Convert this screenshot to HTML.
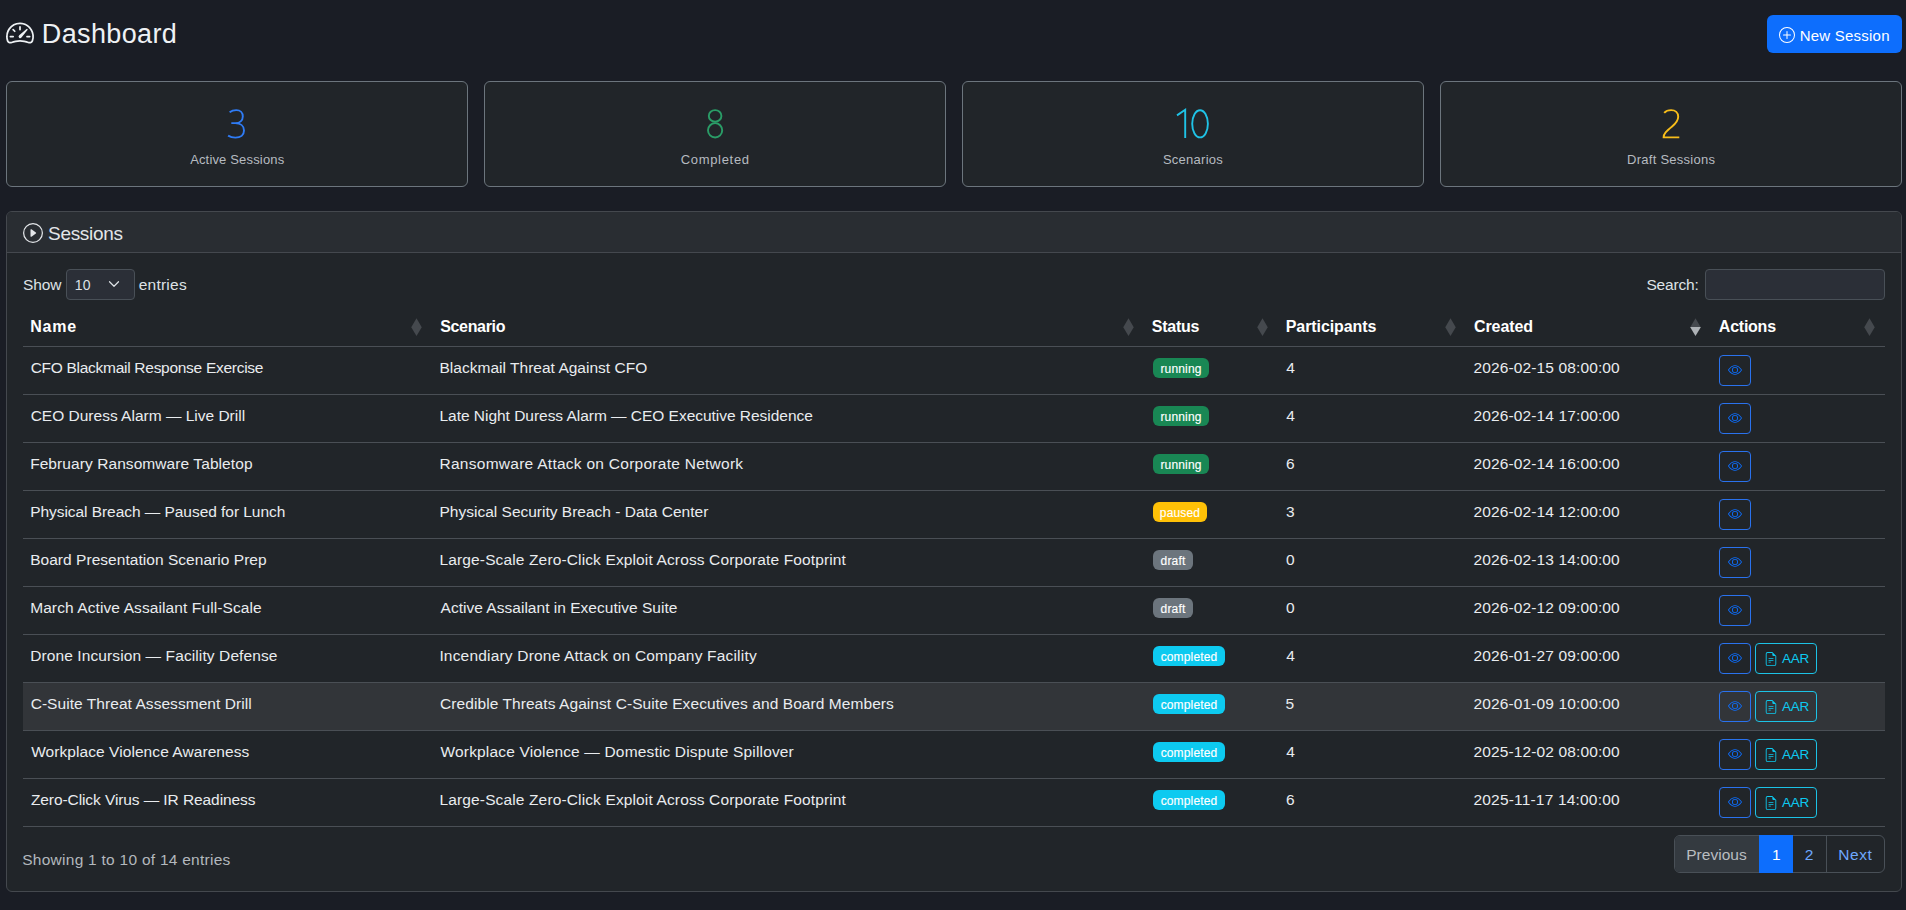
<!DOCTYPE html>
<html><head><meta charset="utf-8"><title>Dashboard</title>
<style>
html,body{margin:0;padding:0}
body{width:1906px;height:910px;overflow:hidden;background:#1a1d25;position:relative;font-family:"Liberation Sans",sans-serif}
.bx{position:absolute;box-sizing:border-box}
.ic{position:absolute;display:block;overflow:visible}
.tx{position:absolute;white-space:nowrap}
.bdg{position:absolute;height:20px;border-radius:6px;color:#fff;font-size:12px;line-height:22px;text-align:center;-webkit-text-stroke:0.15px #fff;letter-spacing:0.15px}
</style></head><body>
<svg class="ic" style="left:6px;top:18.5px" width="28" height="28" viewBox="0 0 16 16" fill="#eef1f4"><path d="M8 4a.5.5 0 0 1 .5.5V6a.5.5 0 0 1-1 0V4.5A.5.5 0 0 1 8 4M3.732 5.732a.5.5 0 0 1 .707 0l.915.914a.5.5 0 1 1-.708.708l-.914-.915a.5.5 0 0 1 0-.707M2 10a.5.5 0 0 1 .5-.5h1.586a.5.5 0 0 1 0 1H2.5A.5.5 0 0 1 2 10m9.5 0a.5.5 0 0 1 .5-.5h1.5a.5.5 0 0 1 0 1H12a.5.5 0 0 1-.5-.5m.754-4.246a.39.39 0 0 0-.527-.02L7.547 9.31a.91.91 0 1 0 1.302 1.258l3.434-4.297a.39.39 0 0 0-.029-.518z"/><path fill-rule="evenodd" d="M0 10a8 8 0 1 1 15.547 2.661c-.442 1.253-1.845 1.602-2.932 1.25C11.309 13.488 9.475 13 8 13c-1.474 0-3.31.488-4.615.911-1.087.352-2.49.003-2.932-1.25A8 8 0 0 1 0 10m8-7a7 7 0 0 0-6.603 9.329c.203.575.923.876 1.68.63C4.397 12.533 6.358 12 8 12s3.604.532 4.923.96c.757.245 1.477-.056 1.68-.631A7 7 0 0 0 8 3"/></svg>
<div class="bx" style="left:1767px;top:15px;width:135px;height:38px;background:#0d6efd;border-radius:6px"></div>
<svg class="ic" style="left:1779px;top:27px" width="16" height="16" viewBox="0 0 16 16" fill="#ffffff"><path d="M8 15A7 7 0 1 1 8 1a7 7 0 0 1 0 14m0 1A8 8 0 1 0 8 0a8 8 0 0 0 0 16"/><path d="M8 4a.5.5 0 0 1 .5.5v3h3a.5.5 0 0 1 0 1h-3v3a.5.5 0 0 1-1 0v-3h-3a.5.5 0 0 1 0-1h3v-3A.5.5 0 0 1 8 4"/></svg>
<div class="bx" style="left:6px;top:81px;width:462px;height:106px;border:1px solid #6c757d;border-radius:6px;background:#212529"></div>
<div class="bx" style="left:484px;top:81px;width:462px;height:106px;border:1px solid #6c757d;border-radius:6px;background:#212529"></div>
<div class="bx" style="left:962px;top:81px;width:462px;height:106px;border:1px solid #6c757d;border-radius:6px;background:#212529"></div>
<div class="bx" style="left:1440px;top:81px;width:462px;height:106px;border:1px solid #6c757d;border-radius:6px;background:#212529"></div>
<svg class="ic" style="left:0;top:0" width="1906" height="200" viewBox="0 0 1906 200" fill="none" stroke-width="1.9" stroke-linecap="butt">
<path stroke="#2f7cf6" d="M229.6,112.2 C231.6,110.7 233.9,110.1 236.3,110.1 C240.4,110.1 242.8,112.7 242.8,116.4 C242.8,120.4 239.8,123.1 235.2,123.1 L231.3,123.1 M235.2,123.1 C240.6,123.1 244,126.1 244,130.4 C244,134.9 240.6,137.6 235.4,137.6 C232.6,137.6 230.1,136.9 228.1,135.6"/>
<ellipse stroke="#2a9d67" cx="715.1" cy="115.9" rx="6.3" ry="5.8"/>
<ellipse stroke="#2a9d67" cx="715.1" cy="130.3" rx="7.1" ry="7.2"/>
<path stroke="#1fc3e6" d="M1177,115.4 L1185.2,109.8 L1185.2,137.9"/>
<ellipse stroke="#1fc3e6" cx="1200.05" cy="123.8" rx="7.85" ry="13.6"/>
<path stroke="#f7bd1a" d="M1664.2,112.9 C1665.8,111 1668.4,110.1 1671.1,110.1 C1675.4,110.1 1678.2,112.8 1678.2,116.8 C1678.2,120.6 1676.1,123.2 1672.1,126.5 C1666.2,131.3 1663.6,133.6 1663.6,137.4 L1679.3,137.4"/>
</svg>
<div class="bx" style="left:6px;top:211px;width:1896px;height:681px;border:1px solid #44484e;border-radius:6px;background:#212529;overflow:hidden"><div style="position:absolute;left:0;top:0;right:0;height:40px;background:#292d32;border-bottom:1px solid #44484e"></div></div>
<svg class="ic" style="left:23px;top:223px" width="20" height="20" viewBox="0 0 16 16" fill="#e3e6e9"><path d="M8 15A7 7 0 1 1 8 1a7 7 0 0 1 0 14m0 1A8 8 0 1 0 8 0a8 8 0 0 0 0 16"/><path d="M6.271 5.055a.5.5 0 0 1 .52.038l3.5 2.5a.5.5 0 0 1 0 .814l-3.5 2.5A.5.5 0 0 1 6 10.5v-5a.5.5 0 0 1 .271-.445"/></svg>
<div class="bx" style="left:66px;top:269px;width:69px;height:31px;border:1px solid #495057;border-radius:4px;background:#2b2f37"></div>
<svg class="ic" style="left:107.5px;top:277.5px" width="12" height="12" viewBox="0 0 16 16"><path fill="none" stroke="#dee2e6" stroke-linecap="round" stroke-linejoin="round" stroke-width="1.6" d="m2 5 6 6 6-6"/></svg>
<div class="bx" style="left:1705px;top:269px;width:180px;height:31px;border:1px solid #495057;border-radius:4px;background:#2b2f37"></div>
<div class="bx" style="left:23px;top:683px;width:1862px;height:47px;background:#323539"></div>
<div class="bx" style="left:23px;top:346px;width:1862px;height:1px;background:#4a4f55"></div>
<div class="bx" style="left:23px;top:394px;width:1862px;height:1px;background:#4a4f55"></div>
<div class="bx" style="left:23px;top:442px;width:1862px;height:1px;background:#4a4f55"></div>
<div class="bx" style="left:23px;top:490px;width:1862px;height:1px;background:#4a4f55"></div>
<div class="bx" style="left:23px;top:538px;width:1862px;height:1px;background:#4a4f55"></div>
<div class="bx" style="left:23px;top:586px;width:1862px;height:1px;background:#4a4f55"></div>
<div class="bx" style="left:23px;top:634px;width:1862px;height:1px;background:#4a4f55"></div>
<div class="bx" style="left:23px;top:682px;width:1862px;height:1px;background:#4a4f55"></div>
<div class="bx" style="left:23px;top:730px;width:1862px;height:1px;background:#4a4f55"></div>
<div class="bx" style="left:23px;top:778px;width:1862px;height:1px;background:#4a4f55"></div>
<div class="bx" style="left:23px;top:826px;width:1862px;height:1px;background:#4a4f55"></div>
<svg class="ic" style="left:411px;top:318px" width="11" height="18" viewBox="0 0 11 18"><polygon fill="#45494e" points="0.4,9 5.5,0.2 10.6,9"/><polygon fill="#45494e" points="0.1,9 5.5,18 10.9,9"/></svg>
<svg class="ic" style="left:1123px;top:318px" width="11" height="18" viewBox="0 0 11 18"><polygon fill="#45494e" points="0.4,9 5.5,0.2 10.6,9"/><polygon fill="#45494e" points="0.1,9 5.5,18 10.9,9"/></svg>
<svg class="ic" style="left:1257px;top:318px" width="11" height="18" viewBox="0 0 11 18"><polygon fill="#45494e" points="0.4,9 5.5,0.2 10.6,9"/><polygon fill="#45494e" points="0.1,9 5.5,18 10.9,9"/></svg>
<svg class="ic" style="left:1445px;top:318px" width="11" height="18" viewBox="0 0 11 18"><polygon fill="#45494e" points="0.4,9 5.5,0.2 10.6,9"/><polygon fill="#45494e" points="0.1,9 5.5,18 10.9,9"/></svg>
<svg class="ic" style="left:1690px;top:318px" width="11" height="18" viewBox="0 0 11 18"><polygon fill="#45494e" points="0.4,9 5.5,0.2 10.6,9"/><polygon fill="#aeb2b6" points="0.1,9 5.5,18 10.9,9"/></svg>
<svg class="ic" style="left:1864px;top:318px" width="11" height="18" viewBox="0 0 11 18"><polygon fill="#45494e" points="0.4,9 5.5,0.2 10.6,9"/><polygon fill="#45494e" points="0.1,9 5.5,18 10.9,9"/></svg>
<div class="bdg" style="left:1153px;top:358px;width:56px;background:#198754">running</div>
<div class="bx" style="left:1719px;top:355px;width:32px;height:31px;border:1px solid #2a72ee;border-radius:4px"></div>
<svg class="ic" style="left:1728px;top:363px" width="14" height="14" viewBox="0 0 16 16" fill="#0d6efd"><path d="M16 8s-3-5.5-8-5.5S0 8 0 8s3 5.5 8 5.5S16 8 16 8M1.173 8a13 13 0 0 1 1.66-2.043C4.12 4.668 5.88 3.5 8 3.5s3.879 1.168 5.168 2.457A13 13 0 0 1 14.828 8q-.086.13-.195.288c-.335.48-.83 1.12-1.465 1.755C11.879 11.332 10.119 12.5 8 12.5s-3.879-1.168-5.168-2.457A13 13 0 0 1 1.172 8z"/><path d="M8 5.5a2.5 2.5 0 1 0 0 5 2.5 2.5 0 0 0 0-5M4.5 8a3.5 3.5 0 1 1 7 0 3.5 3.5 0 0 1-7 0"/></svg>
<div class="bdg" style="left:1153px;top:406px;width:56px;background:#198754">running</div>
<div class="bx" style="left:1719px;top:403px;width:32px;height:31px;border:1px solid #2a72ee;border-radius:4px"></div>
<svg class="ic" style="left:1728px;top:411px" width="14" height="14" viewBox="0 0 16 16" fill="#0d6efd"><path d="M16 8s-3-5.5-8-5.5S0 8 0 8s3 5.5 8 5.5S16 8 16 8M1.173 8a13 13 0 0 1 1.66-2.043C4.12 4.668 5.88 3.5 8 3.5s3.879 1.168 5.168 2.457A13 13 0 0 1 14.828 8q-.086.13-.195.288c-.335.48-.83 1.12-1.465 1.755C11.879 11.332 10.119 12.5 8 12.5s-3.879-1.168-5.168-2.457A13 13 0 0 1 1.172 8z"/><path d="M8 5.5a2.5 2.5 0 1 0 0 5 2.5 2.5 0 0 0 0-5M4.5 8a3.5 3.5 0 1 1 7 0 3.5 3.5 0 0 1-7 0"/></svg>
<div class="bdg" style="left:1153px;top:454px;width:56px;background:#198754">running</div>
<div class="bx" style="left:1719px;top:451px;width:32px;height:31px;border:1px solid #2a72ee;border-radius:4px"></div>
<svg class="ic" style="left:1728px;top:459px" width="14" height="14" viewBox="0 0 16 16" fill="#0d6efd"><path d="M16 8s-3-5.5-8-5.5S0 8 0 8s3 5.5 8 5.5S16 8 16 8M1.173 8a13 13 0 0 1 1.66-2.043C4.12 4.668 5.88 3.5 8 3.5s3.879 1.168 5.168 2.457A13 13 0 0 1 14.828 8q-.086.13-.195.288c-.335.48-.83 1.12-1.465 1.755C11.879 11.332 10.119 12.5 8 12.5s-3.879-1.168-5.168-2.457A13 13 0 0 1 1.172 8z"/><path d="M8 5.5a2.5 2.5 0 1 0 0 5 2.5 2.5 0 0 0 0-5M4.5 8a3.5 3.5 0 1 1 7 0 3.5 3.5 0 0 1-7 0"/></svg>
<div class="bdg" style="left:1153px;top:502px;width:54px;background:#ffc107">paused</div>
<div class="bx" style="left:1719px;top:499px;width:32px;height:31px;border:1px solid #2a72ee;border-radius:4px"></div>
<svg class="ic" style="left:1728px;top:507px" width="14" height="14" viewBox="0 0 16 16" fill="#0d6efd"><path d="M16 8s-3-5.5-8-5.5S0 8 0 8s3 5.5 8 5.5S16 8 16 8M1.173 8a13 13 0 0 1 1.66-2.043C4.12 4.668 5.88 3.5 8 3.5s3.879 1.168 5.168 2.457A13 13 0 0 1 14.828 8q-.086.13-.195.288c-.335.48-.83 1.12-1.465 1.755C11.879 11.332 10.119 12.5 8 12.5s-3.879-1.168-5.168-2.457A13 13 0 0 1 1.172 8z"/><path d="M8 5.5a2.5 2.5 0 1 0 0 5 2.5 2.5 0 0 0 0-5M4.5 8a3.5 3.5 0 1 1 7 0 3.5 3.5 0 0 1-7 0"/></svg>
<div class="bdg" style="left:1153px;top:550px;width:40px;background:#6c757d">draft</div>
<div class="bx" style="left:1719px;top:547px;width:32px;height:31px;border:1px solid #2a72ee;border-radius:4px"></div>
<svg class="ic" style="left:1728px;top:555px" width="14" height="14" viewBox="0 0 16 16" fill="#0d6efd"><path d="M16 8s-3-5.5-8-5.5S0 8 0 8s3 5.5 8 5.5S16 8 16 8M1.173 8a13 13 0 0 1 1.66-2.043C4.12 4.668 5.88 3.5 8 3.5s3.879 1.168 5.168 2.457A13 13 0 0 1 14.828 8q-.086.13-.195.288c-.335.48-.83 1.12-1.465 1.755C11.879 11.332 10.119 12.5 8 12.5s-3.879-1.168-5.168-2.457A13 13 0 0 1 1.172 8z"/><path d="M8 5.5a2.5 2.5 0 1 0 0 5 2.5 2.5 0 0 0 0-5M4.5 8a3.5 3.5 0 1 1 7 0 3.5 3.5 0 0 1-7 0"/></svg>
<div class="bdg" style="left:1153px;top:598px;width:40px;background:#6c757d">draft</div>
<div class="bx" style="left:1719px;top:595px;width:32px;height:31px;border:1px solid #2a72ee;border-radius:4px"></div>
<svg class="ic" style="left:1728px;top:603px" width="14" height="14" viewBox="0 0 16 16" fill="#0d6efd"><path d="M16 8s-3-5.5-8-5.5S0 8 0 8s3 5.5 8 5.5S16 8 16 8M1.173 8a13 13 0 0 1 1.66-2.043C4.12 4.668 5.88 3.5 8 3.5s3.879 1.168 5.168 2.457A13 13 0 0 1 14.828 8q-.086.13-.195.288c-.335.48-.83 1.12-1.465 1.755C11.879 11.332 10.119 12.5 8 12.5s-3.879-1.168-5.168-2.457A13 13 0 0 1 1.172 8z"/><path d="M8 5.5a2.5 2.5 0 1 0 0 5 2.5 2.5 0 0 0 0-5M4.5 8a3.5 3.5 0 1 1 7 0 3.5 3.5 0 0 1-7 0"/></svg>
<div class="bdg" style="left:1153px;top:646px;width:72px;background:#0dcaf0">completed</div>
<div class="bx" style="left:1719px;top:643px;width:32px;height:31px;border:1px solid #2a72ee;border-radius:4px"></div>
<svg class="ic" style="left:1728px;top:651px" width="14" height="14" viewBox="0 0 16 16" fill="#0d6efd"><path d="M16 8s-3-5.5-8-5.5S0 8 0 8s3 5.5 8 5.5S16 8 16 8M1.173 8a13 13 0 0 1 1.66-2.043C4.12 4.668 5.88 3.5 8 3.5s3.879 1.168 5.168 2.457A13 13 0 0 1 14.828 8q-.086.13-.195.288c-.335.48-.83 1.12-1.465 1.755C11.879 11.332 10.119 12.5 8 12.5s-3.879-1.168-5.168-2.457A13 13 0 0 1 1.172 8z"/><path d="M8 5.5a2.5 2.5 0 1 0 0 5 2.5 2.5 0 0 0 0-5M4.5 8a3.5 3.5 0 1 1 7 0 3.5 3.5 0 0 1-7 0"/></svg>
<div class="bx" style="left:1755px;top:643px;width:62px;height:31px;border:1px solid #1cc3e6;border-radius:4px"></div>
<svg class="ic" style="left:1764px;top:652px" width="14" height="14" viewBox="0 0 16 16" fill="#0dcaf0"><path d="M5.5 7a.5.5 0 0 0 0 1h5a.5.5 0 0 0 0-1zM5 9.5a.5.5 0 0 1 .5-.5h5a.5.5 0 0 1 0 1h-5a.5.5 0 0 1-.5-.5m0 2a.5.5 0 0 1 .5-.5h2a.5.5 0 0 1 0 1h-2a.5.5 0 0 1-.5-.5"/><path d="M9.5 0H4a2 2 0 0 0-2 2v12a2 2 0 0 0 2 2h8a2 2 0 0 0 2-2V4.5zm0 1v2A1.5 1.5 0 0 0 11 4.5h2V14a1 1 0 0 1-1 1H4a1 1 0 0 1-1-1V2a1 1 0 0 1 1-1z"/></svg>
<div class="tx" style="left:1782px;top:643px;font-size:13.5px;line-height:31px;color:#0dcaf0;letter-spacing:-0.3px">AAR</div>
<div class="bdg" style="left:1153px;top:694px;width:72px;background:#0dcaf0">completed</div>
<div class="bx" style="left:1719px;top:691px;width:32px;height:31px;border:1px solid #2a72ee;border-radius:4px"></div>
<svg class="ic" style="left:1728px;top:699px" width="14" height="14" viewBox="0 0 16 16" fill="#0d6efd"><path d="M16 8s-3-5.5-8-5.5S0 8 0 8s3 5.5 8 5.5S16 8 16 8M1.173 8a13 13 0 0 1 1.66-2.043C4.12 4.668 5.88 3.5 8 3.5s3.879 1.168 5.168 2.457A13 13 0 0 1 14.828 8q-.086.13-.195.288c-.335.48-.83 1.12-1.465 1.755C11.879 11.332 10.119 12.5 8 12.5s-3.879-1.168-5.168-2.457A13 13 0 0 1 1.172 8z"/><path d="M8 5.5a2.5 2.5 0 1 0 0 5 2.5 2.5 0 0 0 0-5M4.5 8a3.5 3.5 0 1 1 7 0 3.5 3.5 0 0 1-7 0"/></svg>
<div class="bx" style="left:1755px;top:691px;width:62px;height:31px;border:1px solid #1cc3e6;border-radius:4px"></div>
<svg class="ic" style="left:1764px;top:700px" width="14" height="14" viewBox="0 0 16 16" fill="#0dcaf0"><path d="M5.5 7a.5.5 0 0 0 0 1h5a.5.5 0 0 0 0-1zM5 9.5a.5.5 0 0 1 .5-.5h5a.5.5 0 0 1 0 1h-5a.5.5 0 0 1-.5-.5m0 2a.5.5 0 0 1 .5-.5h2a.5.5 0 0 1 0 1h-2a.5.5 0 0 1-.5-.5"/><path d="M9.5 0H4a2 2 0 0 0-2 2v12a2 2 0 0 0 2 2h8a2 2 0 0 0 2-2V4.5zm0 1v2A1.5 1.5 0 0 0 11 4.5h2V14a1 1 0 0 1-1 1H4a1 1 0 0 1-1-1V2a1 1 0 0 1 1-1z"/></svg>
<div class="tx" style="left:1782px;top:691px;font-size:13.5px;line-height:31px;color:#0dcaf0;letter-spacing:-0.3px">AAR</div>
<div class="bdg" style="left:1153px;top:742px;width:72px;background:#0dcaf0">completed</div>
<div class="bx" style="left:1719px;top:739px;width:32px;height:31px;border:1px solid #2a72ee;border-radius:4px"></div>
<svg class="ic" style="left:1728px;top:747px" width="14" height="14" viewBox="0 0 16 16" fill="#0d6efd"><path d="M16 8s-3-5.5-8-5.5S0 8 0 8s3 5.5 8 5.5S16 8 16 8M1.173 8a13 13 0 0 1 1.66-2.043C4.12 4.668 5.88 3.5 8 3.5s3.879 1.168 5.168 2.457A13 13 0 0 1 14.828 8q-.086.13-.195.288c-.335.48-.83 1.12-1.465 1.755C11.879 11.332 10.119 12.5 8 12.5s-3.879-1.168-5.168-2.457A13 13 0 0 1 1.172 8z"/><path d="M8 5.5a2.5 2.5 0 1 0 0 5 2.5 2.5 0 0 0 0-5M4.5 8a3.5 3.5 0 1 1 7 0 3.5 3.5 0 0 1-7 0"/></svg>
<div class="bx" style="left:1755px;top:739px;width:62px;height:31px;border:1px solid #1cc3e6;border-radius:4px"></div>
<svg class="ic" style="left:1764px;top:748px" width="14" height="14" viewBox="0 0 16 16" fill="#0dcaf0"><path d="M5.5 7a.5.5 0 0 0 0 1h5a.5.5 0 0 0 0-1zM5 9.5a.5.5 0 0 1 .5-.5h5a.5.5 0 0 1 0 1h-5a.5.5 0 0 1-.5-.5m0 2a.5.5 0 0 1 .5-.5h2a.5.5 0 0 1 0 1h-2a.5.5 0 0 1-.5-.5"/><path d="M9.5 0H4a2 2 0 0 0-2 2v12a2 2 0 0 0 2 2h8a2 2 0 0 0 2-2V4.5zm0 1v2A1.5 1.5 0 0 0 11 4.5h2V14a1 1 0 0 1-1 1H4a1 1 0 0 1-1-1V2a1 1 0 0 1 1-1z"/></svg>
<div class="tx" style="left:1782px;top:739px;font-size:13.5px;line-height:31px;color:#0dcaf0;letter-spacing:-0.3px">AAR</div>
<div class="bdg" style="left:1153px;top:790px;width:72px;background:#0dcaf0">completed</div>
<div class="bx" style="left:1719px;top:787px;width:32px;height:31px;border:1px solid #2a72ee;border-radius:4px"></div>
<svg class="ic" style="left:1728px;top:795px" width="14" height="14" viewBox="0 0 16 16" fill="#0d6efd"><path d="M16 8s-3-5.5-8-5.5S0 8 0 8s3 5.5 8 5.5S16 8 16 8M1.173 8a13 13 0 0 1 1.66-2.043C4.12 4.668 5.88 3.5 8 3.5s3.879 1.168 5.168 2.457A13 13 0 0 1 14.828 8q-.086.13-.195.288c-.335.48-.83 1.12-1.465 1.755C11.879 11.332 10.119 12.5 8 12.5s-3.879-1.168-5.168-2.457A13 13 0 0 1 1.172 8z"/><path d="M8 5.5a2.5 2.5 0 1 0 0 5 2.5 2.5 0 0 0 0-5M4.5 8a3.5 3.5 0 1 1 7 0 3.5 3.5 0 0 1-7 0"/></svg>
<div class="bx" style="left:1755px;top:787px;width:62px;height:31px;border:1px solid #1cc3e6;border-radius:4px"></div>
<svg class="ic" style="left:1764px;top:796px" width="14" height="14" viewBox="0 0 16 16" fill="#0dcaf0"><path d="M5.5 7a.5.5 0 0 0 0 1h5a.5.5 0 0 0 0-1zM5 9.5a.5.5 0 0 1 .5-.5h5a.5.5 0 0 1 0 1h-5a.5.5 0 0 1-.5-.5m0 2a.5.5 0 0 1 .5-.5h2a.5.5 0 0 1 0 1h-2a.5.5 0 0 1-.5-.5"/><path d="M9.5 0H4a2 2 0 0 0-2 2v12a2 2 0 0 0 2 2h8a2 2 0 0 0 2-2V4.5zm0 1v2A1.5 1.5 0 0 0 11 4.5h2V14a1 1 0 0 1-1 1H4a1 1 0 0 1-1-1V2a1 1 0 0 1 1-1z"/></svg>
<div class="tx" style="left:1782px;top:787px;font-size:13.5px;line-height:31px;color:#0dcaf0;letter-spacing:-0.3px">AAR</div>
<div class="bx" style="left:1674px;top:835px;width:211px;height:38px;border:1px solid #495057;border-radius:6px;overflow:hidden"><div style="position:absolute;left:0;top:0;width:84px;height:36px;background:#343a40"></div><div style="position:absolute;left:151px;top:0;width:1px;height:36px;background:#495057"></div></div>
<div class="bx" style="left:1759px;top:835px;width:34px;height:38px;background:#0d6efd"></div>
<div class="tx" style="left:41.78px;top:13.90px;font-size:27px;line-height:40px;color:#eef1f4;letter-spacing:0.375px">Dashboard</div>
<div class="tx" style="left:1799.65px;top:24.66px;font-size:15px;line-height:22px;color:#ffffff;letter-spacing:0.232px">New Session</div>
<div class="tx" style="left:48.02px;top:219.70px;font-size:19px;line-height:28px;color:#e3e6e9;letter-spacing:-0.294px">Sessions</div>
<div class="tx" style="left:22.95px;top:273.04px;font-size:15.5px;line-height:23px;color:#dee2e6;letter-spacing:-0.120px">Show</div>
<div class="tx" style="left:138.76px;top:273.04px;font-size:15.5px;line-height:23px;color:#dee2e6;letter-spacing:0.226px">entries</div>
<div class="tx" style="left:1646.45px;top:272.84px;font-size:15.5px;line-height:23px;color:#dee2e6;letter-spacing:-0.175px">Search:</div>
<div class="tx" style="left:74.67px;top:274.81px;font-size:14px;line-height:21px;color:#dee2e6;letter-spacing:0.243px">10</div>
<div class="tx" style="left:30.25px;top:314.80px;font-size:16px;line-height:24px;color:#ffffff;font-weight:700;letter-spacing:0.758px">Name</div>
<div class="tx" style="left:440.15px;top:314.80px;font-size:16px;line-height:24px;color:#ffffff;font-weight:700;letter-spacing:-0.322px">Scenario</div>
<div class="tx" style="left:1151.75px;top:314.80px;font-size:16px;line-height:24px;color:#ffffff;font-weight:700;letter-spacing:-0.245px">Status</div>
<div class="tx" style="left:1285.75px;top:314.80px;font-size:16px;line-height:24px;color:#ffffff;font-weight:700;letter-spacing:-0.089px">Participants</div>
<div class="tx" style="left:1473.96px;top:314.80px;font-size:16px;line-height:24px;color:#ffffff;font-weight:700;letter-spacing:-0.079px">Created</div>
<div class="tx" style="left:1718.87px;top:314.80px;font-size:16px;line-height:24px;color:#ffffff;font-weight:700;letter-spacing:-0.249px">Actions</div>
<div class="tx" style="left:30.66px;top:355.74px;font-size:15.5px;line-height:23px;color:#e9ecef;letter-spacing:-0.281px">CFO Blackmail Response Exercise</div>
<div class="tx" style="left:439.53px;top:355.74px;font-size:15.5px;line-height:23px;color:#e9ecef;letter-spacing:0.016px">Blackmail Threat Against CFO</div>
<div class="tx" style="left:1286.25px;top:355.74px;font-size:15.5px;line-height:23px;color:#e9ecef">4</div>
<div class="tx" style="left:1473.48px;top:355.74px;font-size:15.5px;line-height:23px;color:#e9ecef;letter-spacing:0.128px">2026-02-15 08:00:00</div>
<div class="tx" style="left:30.66px;top:403.74px;font-size:15.5px;line-height:23px;color:#e9ecef">CEO Duress Alarm — Live Drill</div>
<div class="tx" style="left:439.53px;top:403.74px;font-size:15.5px;line-height:23px;color:#e9ecef;letter-spacing:-0.030px">Late Night Duress Alarm — CEO Executive Residence</div>
<div class="tx" style="left:1286.25px;top:403.74px;font-size:15.5px;line-height:23px;color:#e9ecef">4</div>
<div class="tx" style="left:1473.48px;top:403.74px;font-size:15.5px;line-height:23px;color:#e9ecef;letter-spacing:0.128px">2026-02-14 17:00:00</div>
<div class="tx" style="left:30.13px;top:451.74px;font-size:15.5px;line-height:23px;color:#e9ecef;letter-spacing:0.078px">February Ransomware Tabletop</div>
<div class="tx" style="left:439.53px;top:451.74px;font-size:15.5px;line-height:23px;color:#e9ecef;letter-spacing:0.266px">Ransomware Attack on Corporate Network</div>
<div class="tx" style="left:1285.88px;top:451.74px;font-size:15.5px;line-height:23px;color:#e9ecef">6</div>
<div class="tx" style="left:1473.48px;top:451.74px;font-size:15.5px;line-height:23px;color:#e9ecef;letter-spacing:0.128px">2026-02-14 16:00:00</div>
<div class="tx" style="left:30.13px;top:499.74px;font-size:15.5px;line-height:23px;color:#e9ecef;letter-spacing:-0.048px">Physical Breach — Paused for Lunch</div>
<div class="tx" style="left:439.53px;top:499.74px;font-size:15.5px;line-height:23px;color:#e9ecef">Physical Security Breach - Data Center</div>
<div class="tx" style="left:1285.89px;top:499.74px;font-size:15.5px;line-height:23px;color:#e9ecef">3</div>
<div class="tx" style="left:1473.48px;top:499.74px;font-size:15.5px;line-height:23px;color:#e9ecef;letter-spacing:0.128px">2026-02-14 12:00:00</div>
<div class="tx" style="left:30.13px;top:547.74px;font-size:15.5px;line-height:23px;color:#e9ecef;letter-spacing:0.042px">Board Presentation Scenario Prep</div>
<div class="tx" style="left:439.53px;top:547.74px;font-size:15.5px;line-height:23px;color:#e9ecef;letter-spacing:0.135px">Large-Scale Zero-Click Exploit Across Corporate Footprint</div>
<div class="tx" style="left:1286.00px;top:547.74px;font-size:15.5px;line-height:23px;color:#e9ecef">0</div>
<div class="tx" style="left:1473.48px;top:547.74px;font-size:15.5px;line-height:23px;color:#e9ecef;letter-spacing:0.128px">2026-02-13 14:00:00</div>
<div class="tx" style="left:30.13px;top:595.74px;font-size:15.5px;line-height:23px;color:#e9ecef;letter-spacing:0.103px">March Active Assailant Full-Scale</div>
<div class="tx" style="left:440.55px;top:595.74px;font-size:15.5px;line-height:23px;color:#e9ecef;letter-spacing:0.023px">Active Assailant in Executive Suite</div>
<div class="tx" style="left:1286.00px;top:595.74px;font-size:15.5px;line-height:23px;color:#e9ecef">0</div>
<div class="tx" style="left:1473.48px;top:595.74px;font-size:15.5px;line-height:23px;color:#e9ecef;letter-spacing:0.128px">2026-02-12 09:00:00</div>
<div class="tx" style="left:30.13px;top:643.74px;font-size:15.5px;line-height:23px;color:#e9ecef;letter-spacing:0.107px">Drone Incursion — Facility Defense</div>
<div class="tx" style="left:439.38px;top:643.74px;font-size:15.5px;line-height:23px;color:#e9ecef;letter-spacing:0.190px">Incendiary Drone Attack on Company Facility</div>
<div class="tx" style="left:1286.25px;top:643.74px;font-size:15.5px;line-height:23px;color:#e9ecef">4</div>
<div class="tx" style="left:1473.48px;top:643.74px;font-size:15.5px;line-height:23px;color:#e9ecef;letter-spacing:0.128px">2026-01-27 09:00:00</div>
<div class="tx" style="left:30.66px;top:691.74px;font-size:15.5px;line-height:23px;color:#e9ecef;letter-spacing:0.055px">C-Suite Threat Assessment Drill</div>
<div class="tx" style="left:440.06px;top:691.74px;font-size:15.5px;line-height:23px;color:#e9ecef;letter-spacing:0.073px">Credible Threats Against C-Suite Executives and Board Members</div>
<div class="tx" style="left:1285.52px;top:691.74px;font-size:15.5px;line-height:23px;color:#e9ecef">5</div>
<div class="tx" style="left:1473.48px;top:691.74px;font-size:15.5px;line-height:23px;color:#e9ecef;letter-spacing:0.128px">2026-01-09 10:00:00</div>
<div class="tx" style="left:31.15px;top:739.74px;font-size:15.5px;line-height:23px;color:#e9ecef;letter-spacing:0.070px">Workplace Violence Awareness</div>
<div class="tx" style="left:440.55px;top:739.74px;font-size:15.5px;line-height:23px;color:#e9ecef;letter-spacing:0.163px">Workplace Violence — Domestic Dispute Spillover</div>
<div class="tx" style="left:1286.25px;top:739.74px;font-size:15.5px;line-height:23px;color:#e9ecef">4</div>
<div class="tx" style="left:1473.48px;top:739.74px;font-size:15.5px;line-height:23px;color:#e9ecef;letter-spacing:0.128px">2025-12-02 08:00:00</div>
<div class="tx" style="left:30.95px;top:787.74px;font-size:15.5px;line-height:23px;color:#e9ecef;letter-spacing:-0.086px">Zero-Click Virus — IR Readiness</div>
<div class="tx" style="left:439.53px;top:787.74px;font-size:15.5px;line-height:23px;color:#e9ecef;letter-spacing:0.135px">Large-Scale Zero-Click Exploit Across Corporate Footprint</div>
<div class="tx" style="left:1285.88px;top:787.74px;font-size:15.5px;line-height:23px;color:#e9ecef">6</div>
<div class="tx" style="left:1473.48px;top:787.74px;font-size:15.5px;line-height:23px;color:#e9ecef;letter-spacing:0.184px">2025-11-17 14:00:00</div>
<div class="tx" style="left:22.25px;top:847.84px;font-size:15.5px;line-height:23px;color:#b3b8bd;letter-spacing:0.261px">Showing 1 to 10 of 14 entries</div>
<div class="tx" style="left:1686.13px;top:843.04px;font-size:15.5px;line-height:23px;color:#b9bdc1;letter-spacing:0.046px">Previous</div>
<div class="tx" style="left:1772.08px;top:843.04px;font-size:15.5px;line-height:23px;color:#ffffff">1</div>
<div class="tx" style="left:1804.78px;top:843.04px;font-size:15.5px;line-height:23px;color:#6ea8fe">2</div>
<div class="tx" style="left:1838.33px;top:843.04px;font-size:15.5px;line-height:23px;color:#6ea8fe;letter-spacing:0.519px">Next</div>
<div class="tx" style="left:190.14px;top:149.92px;font-size:13px;line-height:20px;color:#b6bbc0;letter-spacing:0.163px">Active Sessions</div>
<div class="tx" style="left:680.66px;top:149.92px;font-size:13px;line-height:20px;color:#b6bbc0;letter-spacing:0.690px">Completed</div>
<div class="tx" style="left:1162.89px;top:149.92px;font-size:13px;line-height:20px;color:#b6bbc0;letter-spacing:0.267px">Scenarios</div>
<div class="tx" style="left:1627.07px;top:149.92px;font-size:13px;line-height:20px;color:#b6bbc0;letter-spacing:0.257px">Draft Sessions</div>
</body></html>
